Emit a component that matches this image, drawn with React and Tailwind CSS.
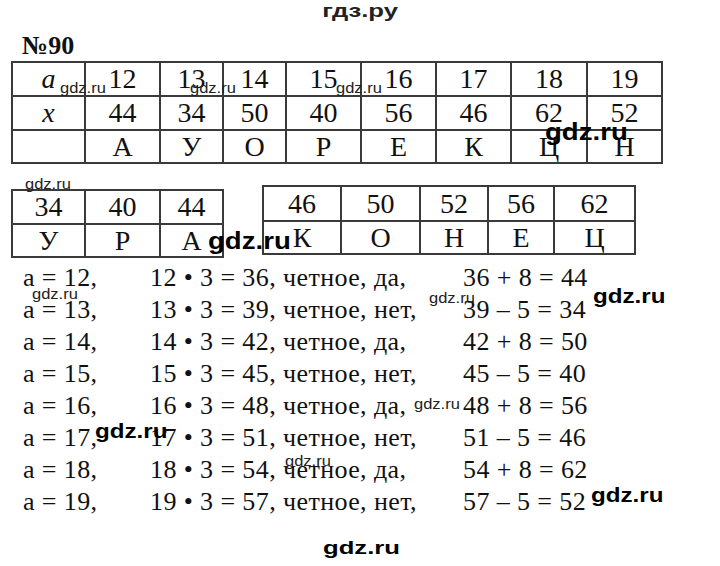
import React from 'react';

const line = 'border-[#3a3a3a]';

const topRows = [
  { h: 'h-[34px]', cells: [<i key="a">a</i>, '12', '13', '14', '15', '16', '17', '18', '19'] },
  { h: 'h-[34px]', cells: [<i key="x">x</i>, '44', '34', '50', '40', '56', '46', '62', '52'] },
  { h: 'h-[33px]', cells: ['', 'А', 'У', 'О', 'Р', 'Е', 'К', 'Ц', 'Н'] },
];

const lines = [
  ['a = 12,', '12 • 3 = 36, четное, да,', '36 + 8 = 44'],
  ['a = 13,', '13 • 3 = 39, четное, нет,', '39 – 5 = 34'],
  ['a = 14,', '14 • 3 = 42, четное, да,', '42 + 8 = 50'],
  ['a = 15,', '15 • 3 = 45, четное, нет,', '45 – 5 = 40'],
  ['a = 16,', '16 • 3 = 48, четное, да,', '48 + 8 = 56'],
  ['a = 17,', '17 • 3 = 51, четное, нет,', '51 – 5 = 46'],
  ['a = 18,', '18 • 3 = 54, четное, да,', '54 + 8 = 62'],
  ['a = 19,', '19 • 3 = 57, четное, нет,', '57 – 5 = 52'],
];

const Cell = ({ h, children }) => (
  <div className={`${h} flex items-center justify-center border-r-2 border-b-2 ${line}`}>
    {children}
  </div>
);

const Small = ({ className }) => (
  <span className={`absolute text-[15px] leading-none text-[#222] font-['Liberation_Sans',sans-serif] origin-left scale-x-110 ${className}`}>
    gdz.ru
  </span>
);

const Big = ({ className }) => (
  <span className={`absolute leading-none font-bold text-black font-['Liberation_Sans',sans-serif] origin-left ${className}`}>
    gdz.ru
  </span>
);

export default function App() {
  return (
    <div className="relative w-[720px] h-[566px] overflow-hidden bg-white text-[#111] font-['Liberation_Serif',serif]">
      {/* site header */}
      <div className="h-[33px] pt-[2px] text-center leading-[18px]">
        <span className="inline-block text-[19px] font-bold text-[#222] font-['Liberation_Sans',sans-serif] scale-x-135">
          гдз.ру
        </span>
      </div>

      <div className="h-[26px] pl-[22px] text-[26px] leading-[26px] font-bold">№90</div>

      {/* main table */}
      <div className={`mt-[2px] ml-[11px] inline-grid grid-cols-[73px_75px_63px_63px_75px_75px_75px_76px_75px] border-t-2 border-l-2 ${line} text-[28px]`}>
        {topRows.map((r, i) =>
          r.cells.map((c, j) => (
            <Cell key={`${i}-${j}`} h={r.h}>
              {c}
            </Cell>
          ))
        )}
      </div>

      {/* answer tables */}
      <div className="mt-[21px] flex items-start text-[28px]">
        <div className={`mt-[4px] ml-[11px] grid grid-cols-[73px_75px_63px] border-t-2 border-l-2 ${line}`}>
          {['34', '40', '44'].map((c) => (
            <Cell key={c} h="h-[34px]">{c}</Cell>
          ))}
          {['У', 'Р', 'А'].map((c) => (
            <Cell key={c} h="h-[33px]">{c}</Cell>
          ))}
        </div>
        <div className={`ml-[38px] grid grid-cols-[78px_79px_68px_66px_81px] border-t-2 border-l-2 ${line}`}>
          {['46', '50', '52', '56', '62'].map((c) => (
            <Cell key={c} h="h-[35px]">{c}</Cell>
          ))}
          {['К', 'О', 'Н', 'Е', 'Ц'].map((c) => (
            <Cell key={c} h="h-[33px]">{c}</Cell>
          ))}
        </div>
      </div>

      {/* solution lines */}
      <div className="mt-[4px] pl-[23px] text-[26px] leading-[32px] tracking-[0.4px]">
        {lines.map((l) => (
          <div key={l[0]} className="flex whitespace-nowrap">
            <span className="w-[127px]">{l[0]}</span>
            <span className="w-[313px]">{l[1]}</span>
            <span>{l[2]}</span>
          </div>
        ))}
      </div>

      {/* watermarks */}
      <Small className="left-[60px] top-[80px]" />
      <Small className="left-[190px] top-[80px]" />
      <Small className="left-[336px] top-[80px]" />
      <Small className="left-[25px] top-[176px]" />
      <Small className="left-[32px] top-[286px] text-[14px] scale-x-100" />
      <Small className="left-[429px] top-[290px]" />
      <Small className="left-[414px] top-[396px]" />
      <Small className="left-[285px] top-[453px]" />

      <Big className="left-[545px] top-[120px] text-[24px] scale-x-115" />
      <Big className="left-[208px] top-[229px] text-[24px] scale-x-115" />
      <Big className="left-[593px] top-[285px] text-[21px] scale-x-115" />
      <Big className="left-[95px] top-[420px] text-[21px] scale-x-115" />
      <Big className="left-[591px] top-[484px] text-[21px] scale-x-115" />
      <Big className="left-[323px] top-[538px] text-[19px] scale-x-135" />
    </div>
  );
}
